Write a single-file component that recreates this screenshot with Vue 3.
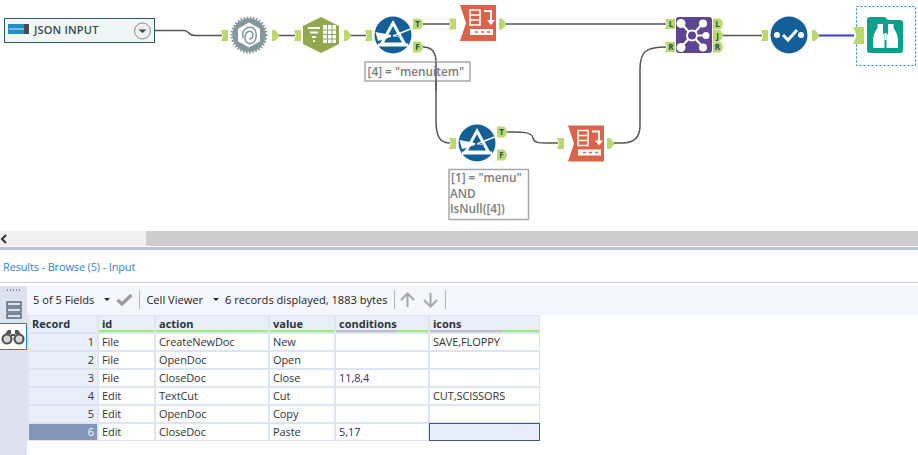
<script setup>
const anchors = [
  // input anchors
  { k: "in", x: 221, y: 35.5 }, { k: "in", x: 294, y: 35.5 }, { k: "in", x: 365, y: 35.5 },
  { k: "in", x: 449, y: 24 }, { k: "in", x: 761, y: 35.5 }, { k: "in", x: 449, y: 143.5 }, { k: "in", x: 557, y: 143.5 },
  // output anchors
  { k: "out", x: 272, y: 35.5 }, { k: "out", x: 344, y: 35.5 }, { k: "out", x: 499, y: 24 },
  { k: "out", x: 812, y: 35.5 }, { k: "out", x: 607, y: 143.5 },
];
const lettered = [
  { x: 413, y: 24, t: "T" }, { x: 413, y: 47, t: "F" },
  { x: 497, y: 132, t: "T" }, { x: 497, y: 155, t: "F" },
  { x: 713, y: 24, t: "L" }, { x: 713, y: 35.5, t: "J" }, { x: 713, y: 47, t: "R" },
];
const wires = [
  "M155 30.5 H184 C190 30.5 187 35.5 195 35.5 H222",
  "M279 35.5 H295", "M351 35.5 H366", "M423 24 H450",
  "M423 47 C432 47 436 52 436 62 V120 C436 137 440 143 450 143",
  "M506 24 H666", "M507 132 C518 132 532 131 533 138 C534 143 540 143 546 143 H558",
  "M614 143 H622 C634 143 640 138 640 126 V70 C640 52 645 47 666 47",
  "M723 35.5 H762",
];
const columns = [
  { key: "record", label: "Record" },
  { key: "id", label: "id" },
  { key: "action", label: "action" },
  { key: "value", label: "value" },
  { key: "conditions", label: "conditions" },
  { key: "icons", label: "icons" },
];
const rows = [
  { record: 1, id: "File", action: "CreateNewDoc", value: "New", conditions: "", icons: "SAVE,FLOPPY" },
  { record: 2, id: "File", action: "OpenDoc", value: "Open", conditions: "", icons: "" },
  { record: 3, id: "File", action: "CloseDoc", value: "Close", conditions: "11,8,4", icons: "" },
  { record: 4, id: "Edit", action: "TextCut", value: "Cut", conditions: "", icons: "CUT,SCISSORS" },
  { record: 5, id: "Edit", action: "OpenDoc", value: "Copy", conditions: "", icons: "" },
  { record: 6, id: "Edit", action: "CloseDoc", value: "Paste", conditions: "5,17", icons: "" },
];
</script>

<template>
  <div class="page">
    <div class="canvas">
      <svg width="918" height="231" viewBox="0 0 918 231">
        <defs>
          <g id="prism">
            <circle r="18.500" fill="#155f99" />
            <path d="M0 -12 L11.500 9 H-11.500 Z" fill="none" stroke="#fff" stroke-width="3" />
            <path d="M-17.500 -3 L-2 0 L-2 2 L-15 6 Z" fill="#fff" />
            <path d="M0 1 L17.500 -6" stroke="#fff" stroke-width="1.500" />
            <path d="M0 1 L8 2" stroke="#9fc0da" stroke-width="1.200" />
            <path d="M-15 8.500 H15 V11.500 H-15 Z" fill="#fff" />
          </g>
          <g id="select">
            <path d="M0 0 H36 V36 H0 L6 18 Z" fill="#d9644c" />
            <path d="M10 5 H20 V20 H10 Z" fill="none" stroke="#fff" stroke-width="1.500" />
            <path d="M10 10 H20 M10 15 H20" stroke="#fff" stroke-width="1.500" />
            <path d="M24 6 H31 V16" fill="none" stroke="#fff" stroke-width="2" />
            <path d="M27 15 H35 L31 20 Z" fill="#fff" />
            <rect x="10" y="24" width="23" height="6" fill="#fff" />
            <path d="M15 27 H18 M21 27 H24 M27 27 H30" stroke="#d9644c" stroke-width="1.500" />
          </g>
        </defs>

        <!-- wires -->
        <path v-for="(w, i) in wires" :key="i" :d="w" fill="none" stroke="#555" stroke-width="1.500" />
        <path d="M819 35.500 H854" stroke="#3a3ae0" stroke-width="2" />

        <!-- json input -->
        <rect x="4.500" y="18.500" width="150" height="24" fill="#f0f5f6" stroke="#2e5a5c" />
        <rect x="8" y="24" width="16" height="10" fill="#1f8fc4" />
        <path d="M9 29 H24" stroke="#d9eef8" />
        <rect x="24" y="24" width="5" height="10" fill="#4a4a4a" />
        <text x="34" y="34" class="box-title">JSON INPUT</text>
        <circle cx="142.500" cy="31" r="8" fill="#eef0f0" stroke="#8a8a8a" />
        <path d="M138.500 29.500 H146.500 L142.500 33 Z" fill="#444" />

        <!-- gear -->
        <circle cx="249" cy="35" r="16.500" fill="#84979c" stroke="#84979c" stroke-width="4" stroke-dasharray="1.500 1.500" />
        <circle cx="249" cy="35" r="16.500" fill="#84979c" />
        <path d="M249 22.500 L260 28.800 V41.200 L249 47.500 L238 41.200 V28.800 Z" fill="#fff" />
        <path d="M243 38 C241 30 247 26 252 27.500 C257 29 257.500 38 254 42 C250 45.500 244 43 245 36 C246 31 251 30 252.500 33 C254 37 251 40 249 38.500" fill="none" stroke="#84979c" stroke-width="1.500" />

        <!-- text to columns -->
        <path d="M321 17 L339 26 V44 L321 53 L303 44 V26 Z" fill="#92a84c" />
        <path d="M308 28 H320 M310 32.500 H318 M312 37 H316 M313 41 H315" stroke="#fff" stroke-width="2.200" />
        <rect x="323" y="25" width="13" height="18" fill="#fff" />
        <path d="M323 30 H336 M323 34.500 H336 M323 39 H336 M327.500 25 V43 M332 25 V43" stroke="#92a84c" />

        <!-- filters -->
        <use href="#prism" x="393" y="35" />
        <use href="#prism" x="477" y="143" />

        <!-- selects -->
        <use href="#select" x="460" y="5" />
        <use href="#select" x="568" y="125.500" />

        <!-- join -->
        <rect x="676" y="17" width="36" height="36" rx="3" fill="#5f4490" />
        <path d="M681 23 L692 35.500 M703 23 L692 35.500 M681 47 L692 35.500 M703 47 L692 35.500 M692 35.500 H706" stroke="#fff" stroke-width="2" />
        <circle cx="692" cy="35.500" r="5" fill="#5f4490" stroke="#fff" stroke-width="2" />
        <circle cx="681" cy="23.500" r="4.500" fill="#fff" /><circle cx="703" cy="23.500" r="4" fill="#fff" />
        <circle cx="681" cy="47.500" r="4.500" fill="#fff" /><circle cx="703" cy="47.500" r="4" fill="#fff" />
        <circle cx="706" cy="35.500" r="3.500" fill="#fff" />

        <!-- check -->
        <circle cx="789" cy="35" r="18.500" fill="#155f99" />
        <circle cx="777" cy="35" r="3" fill="#fff" /><circle cx="801" cy="35" r="3" fill="#fff" />
        <path d="M783 35 L788 40 L797 30" fill="none" stroke="#fff" stroke-width="3" />

        <!-- browse -->
        <rect x="856.500" y="6.500" width="59" height="59" fill="none" stroke="#1a84d4" stroke-dasharray="2 2" />
        <path d="M867 20 Q867 17 870 17 H885 L888 20 H900 Q903 20 903 23 V50 Q903 53 900 53 H870 Q867 53 867 50 Z" fill="#0aa08c" />
        <path d="M877.500 24 H883 V34 H884.500 V48 H873 V41 Q873 34 877.500 28 Z M893.500 24 H888 V34 H886.500 V48 H898 V41 Q898 34 893.500 28 Z" fill="#fff" />
        <rect x="884.500" y="33" width="2" height="7" fill="#fff" />
        <path d="M853 27 H864 V44 H853 L857 35.500 Z" fill="#b9d96b" />

        <!-- anchors -->
        <template v-for="(a, i) in anchors" :key="i">
          <path v-if="a.k === 'in'" :transform="`translate(${a.x} ${a.y})`" d="M0 -5.500 H7 V5.500 H0 L2 0 Z" fill="#b9d96b" />
          <path v-else :transform="`translate(${a.x} ${a.y})`" d="M0 -5.500 H3 L7 -1 V1 L3 5.500 H0 Z" fill="#b9d96b" />
        </template>
        <g v-for="(a, i) in lettered" :key="'l' + i" :transform="`translate(${a.x} ${a.y})`">
          <path d="M0 -5.500 H7 Q10 -3 10 0 Q10 3 7 5.500 H0 Z" fill="#b9d96b" />
          <text x="4.500" y="3" class="anchor-text">{{ a.t }}</text>
        </g>
        <g transform="translate(675 24)">
          <path d="M-10 -5 H0 V5 H-10 L-8 0 Z" fill="#b9d96b" />
          <text x="-4" y="3" class="anchor-text">L</text>
        </g>
        <g transform="translate(675 47)">
          <path d="M-10 -5 H0 V5 H-10 L-8 0 Z" fill="#b9d96b" />
          <text x="-4" y="3" class="anchor-text">R</text>
        </g>

        <!-- annotations -->
        <rect x="365" y="62" width="105" height="19" fill="#fff" stroke="#a8a8a8" stroke-width="1.500" />
        <text x="367.500" y="75.500" class="note">[4] = "menuitem"</text>
        <path d="M436 62 V90" stroke="#555" stroke-width="1.500" />
        <rect x="449" y="169.500" width="79.500" height="50" fill="#fff" stroke="#a8a8a8" stroke-width="1.500" />
        <text x="451" y="182" class="note">[1] = "menu"</text>
        <text x="450" y="198" class="note">AND</text>
        <text x="450" y="213" class="note">IsNull([4])</text>
      </svg>
    </div>

    <div class="hscroll">
      <div class="hscroll-left">
        <svg width="8" height="10" viewBox="0 0 8 10"><path d="M6 1 L2 5 L6 9" fill="none" stroke="#333" stroke-width="2" /></svg>
      </div>
      <div class="hscroll-thumb"></div>
    </div>
    <div class="splitter"></div>

    <div class="results-bar">Results - Browse (5) - Input</div>

    <div class="panel">
      <aside class="side">
        <div class="grip"></div>
        <svg class="rows-icon" width="16" height="18" viewBox="0 0 16 18">
          <rect x="1" y="1" width="14" height="4" fill="none" stroke="#5a6a7c" stroke-width="1.500" />
          <rect x="1" y="7" width="14" height="4" fill="none" stroke="#5a6a7c" stroke-width="1.500" />
          <rect x="1" y="13" width="14" height="4" fill="none" stroke="#5a6a7c" stroke-width="1.500" />
        </svg>
        <div class="side-tab">
          <svg width="24" height="16" viewBox="0 0 24 16">
            <circle cx="6" cy="10" r="4.500" fill="#d8d8d8" stroke="#555" stroke-width="2.200" />
            <circle cx="18" cy="10" r="4.500" fill="#d8d8d8" stroke="#555" stroke-width="2.200" />
            <path d="M4 5 L7 1 H10 V7 H14 V1 H17 L20 5" fill="#555" />
          </svg>
        </div>
      </aside>

      <main class="content">
        <div class="toolbar">
          <span>5 of 5 Fields</span>
          <span class="caret"></span>
          <svg class="check" width="17" height="13" viewBox="0 0 17 13"><path d="M1.500 7 L6 11 L15.500 2" fill="none" stroke="#9a9a9a" stroke-width="3.200" /></svg>
          <span class="sep"></span>
          <span>Cell Viewer</span>
          <span class="caret"></span>
          <span>6 records displayed, 1883 bytes</span>
          <span class="sep"></span>
          <svg class="arrow-first" width="17" height="16" viewBox="0 0 17 16"><path d="M8.500 15 V2 M2 8 L8.500 1.500 L15 8" fill="none" stroke="#a8a8a8" stroke-width="2" /></svg>
          <svg width="17" height="16" viewBox="0 0 17 16"><path d="M8.500 1 V14 M2 8 L8.500 14.500 L15 8" fill="none" stroke="#a8a8a8" stroke-width="2" /></svg>
          <span class="sep"></span>
        </div>

        <div class="grid">
          <div
            v-for="col in columns"
            :key="col.key"
            class="head"
            :class="'head-' + col.key"
          >{{ col.label }}</div>
          <template v-for="row in rows" :key="row.record">
            <div
              v-for="col in columns"
              :key="col.key"
              class="cell"
              :class="{
                num: col.key === 'record',
                cond: col.key === 'conditions',
                current: col.key === 'record' && row.record === 6,
                focused: col.key === 'icons' && row.record === 6,
              }"
            >{{ row[col.key] }}</div>
          </template>
        </div>
      </main>
    </div>
  </div>
</template>

<style>
html, body { margin: 0; background: #fff; overflow: hidden; }
</style>

<style scoped>
.page {
  width: 918px;
  height: 455px;
  display: flex;
  flex-direction: column;
  overflow: hidden;
  font-family: "Open Sans", "Noto Sans", sans-serif;
  font-size: 11px;
  color: #333;
}
.canvas { height: 231px; flex: none; }
.canvas svg { display: block; }
.box-title {
  font: 600 11px "Open Sans", sans-serif;
  letter-spacing: 0.2px;
  fill: #2f4a4c;
}
.anchor-text {
  font: 700 8px "Open Sans", sans-serif;
  fill: #23505a;
  text-anchor: middle;
}
.note {
  font: 600 11.800px "Open Sans", sans-serif;
  fill: #7c7c7c;
}
.hscroll { height: 15px; display: flex; flex: none; }
.hscroll-left {
  width: 146px;
  background: #f0f0f0;
  display: flex;
  align-items: center;
}
.hscroll-thumb { flex: 1; background: #cdcdcd; }
.splitter {
  height: 3px;
  margin-top: 1px;
  flex: none;
  background: #b9c3dc;
}
.results-bar {
  height: 33px;
  flex: none;
  box-sizing: border-box;
  padding: 0 0 0 3px;
  display: flex;
  align-items: center;
  letter-spacing: -0.15px;
  color: #2f86c8;
  border-bottom: 1px solid #d0ccd8;
}
.panel { flex: 1; display: flex; min-height: 0; margin-top: 3px; }
.side {
  width: 27px;
  flex: none;
  background: #dde2ee;
  display: flex;
  flex-direction: column;
  align-items: center;
}
.grip {
  width: 14px;
  height: 2px;
  margin-top: 3px;
  background: repeating-linear-gradient(90deg, #8a8a8a 0 1px, transparent 1px 3px);
}
.rows-icon { margin-top: 10px; }
.side-tab {
  width: 27px;
  height: 27px;
  box-sizing: border-box;
  margin-top: 4px;
  background: #fff;
  border: 1px solid #1a84d4;
  border-left: none;
  display: flex;
  align-items: center;
  justify-content: center;
}
.content { flex: 1; min-width: 0; background: #fff; }
.toolbar {
  height: 29px;
  box-sizing: border-box;
  padding: 0 0 2px 6px;
  background: #f4f6fc;
  display: flex;
  align-items: center;
  gap: 6px;
  font-size: 11.100px;
  color: #222;
}
.caret {
  width: 0;
  height: 0;
  border-left: 3px solid transparent;
  border-right: 3px solid transparent;
  border-top: 3px solid #222;
  margin-left: 4px;
}
.sep { width: 1px; height: 19px; background: #b5b5b5; }
.arrow-first { margin-left: -2px; }
.grid {
  display: inline-grid;
  vertical-align: top;
  grid-template-columns: 68px 55px 112px 64px 92px 109px;
  grid-auto-rows: 16px;
  gap: 2px;
  padding: 1px 1px 1px 2px;
  background: #dde4f2;
}
.head {
  box-sizing: border-box;
  padding-left: 3px;
  background: #e9eef9;
  border-bottom: 2px solid #98ee72;
  font-weight: 700;
  line-height: 15px;
  color: #2a3440;
}
.head-record { border-bottom-color: #e9eef9; }
.head-conditions, .head-icons {
  border-bottom: none;
  background:
    linear-gradient(90deg, #bdbdbd 0 66%, #98ee72 66% 100%) bottom / 100% 2px no-repeat,
    #e9eef9;
}
.cell {
  box-sizing: border-box;
  padding-left: 3px;
  background: #fff;
  line-height: 16px;
  letter-spacing: -0.1px;
  white-space: nowrap;
  overflow: hidden;
}
.num { text-align: right; padding-right: 3px; background: #e9eef9; }
.cond { color: #3d2a5c; }
.current { background: #8496b8; color: #fff; }
.focused { background: #e9edf9; outline: 1px solid #4a5680; }
</style>
